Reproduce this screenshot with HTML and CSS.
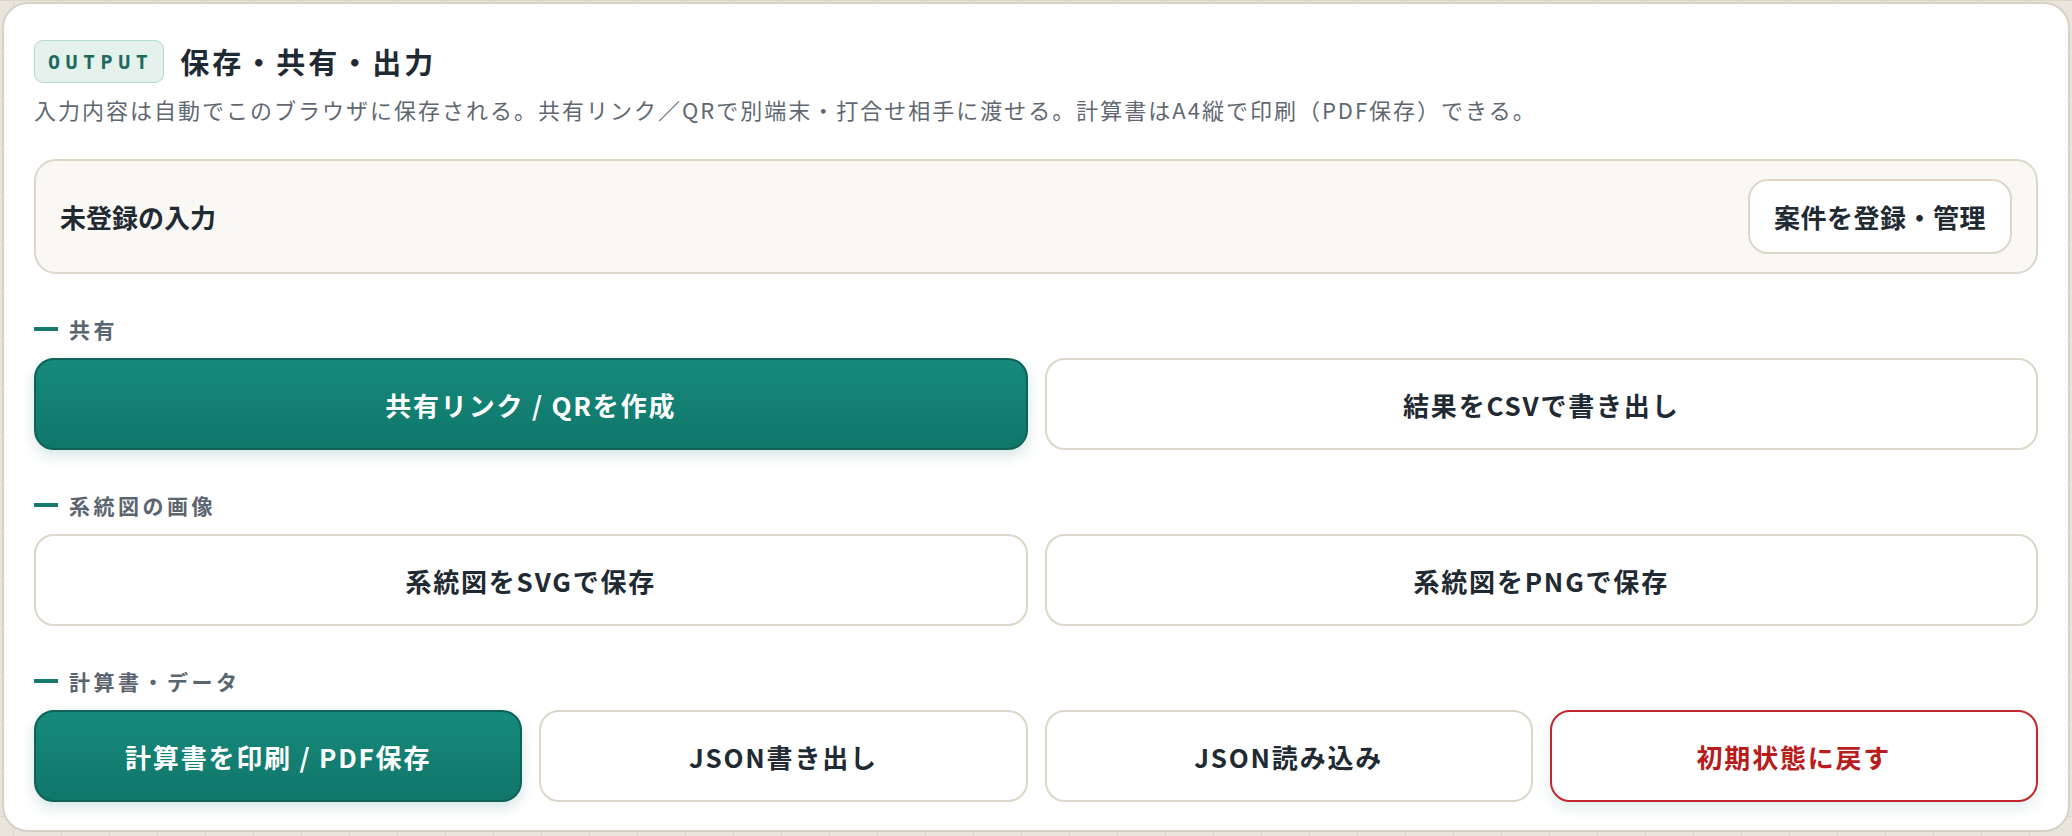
FILE: index.html
```html
<!DOCTYPE html>
<html lang="ja">
<head>
    <meta charset="UTF-8">
    <meta name="viewport" content="width=device-width, initial-scale=1.0">
    <title>保存・共有・出力</title>
    <link rel="stylesheet" href="styles.css">
</head>
<body>
    <section class="panel">
        <header class="panel-head">
            <span class="tag">OUTPUT</span>
            <h2 class="panel-title">保存・共有・出力</h2>
        </header>
        <p class="panel-desc">入力内容は自動でこのブラウザに保存される。共有リンク／QRで別端末・打合せ相手に渡せる。計算書はA4縦で印刷（PDF保存）できる。</p>

        <div class="project-bar">
            <span class="project-name">未登録の入力</span>
            <button class="btn btn-manage">案件を登録・管理</button>
        </div>

        <div class="group">
            <h3 class="group-label">共有</h3>
            <div class="btn-row cols-2">
                <button class="btn btn-primary">共有リンク / QRを作成</button>
                <button class="btn">結果をCSVで書き出し</button>
            </div>
        </div>

        <div class="group">
            <h3 class="group-label">系統図の画像</h3>
            <div class="btn-row cols-2">
                <button class="btn">系統図をSVGで保存</button>
                <button class="btn">系統図をPNGで保存</button>
            </div>
        </div>

        <div class="group">
            <h3 class="group-label">計算書・データ</h3>
            <div class="btn-row cols-4">
                <button class="btn btn-primary">計算書を印刷 / PDF保存</button>
                <button class="btn">JSON書き出し</button>
                <button class="btn">JSON読み込み</button>
                <button class="btn btn-danger">初期状態に戻す</button>
            </div>
        </div>
    </section>
</body>
</html>
```

FILE: styles.css
```css
body {
    margin: 0;
    padding: 2px;
    font-family: "Noto Sans CJK JP", "Noto Sans", sans-serif;
    color: #1f2a33;
    background-color: #e9e5dc;
    background-image:
        linear-gradient(to right, #ddd7cb 1px, transparent 1px),
        linear-gradient(to bottom, #ddd7cb 1px, transparent 1px);
    background-size: 48px 48px;
    background-position: 13px 0;
}

.panel {
    background: #ffffff;
    border: 2px solid #d8d1c4;
    border-radius: 26px;
    padding: 36px 30px 28px;
}

.panel-head {
    display: flex;
    align-items: center;
    gap: 16px;
}

.tag {
    display: inline-flex;
    align-items: center;
    box-sizing: border-box;
    height: 43px;
    padding: 0 10px 0 13px;
    background: #e4f1ed;
    border: 1.5px solid #b5d9cf;
    border-radius: 9px;
    font-family: "DejaVu Sans Mono", "Liberation Mono", monospace;
    font-size: 20px;
    font-weight: 700;
    letter-spacing: 5.5px;
    color: #1d6b5e;
}

.panel-title {
    margin: 0;
    font-size: 29px;
    font-weight: 700;
    letter-spacing: 3px;
    line-height: 1.2;
}

.panel-desc {
    margin: 10px 0 0;
    font-size: 22px;
    line-height: 32px;
    letter-spacing: 2px;
    color: #5f6872;
}

.project-bar {
    margin-top: 34px;
    display: flex;
    align-items: center;
    justify-content: space-between;
    padding: 18px 24px;
    background: #faf8f4;
    border: 2px solid #ddd6c9;
    border-radius: 22px;
}

.project-name {
    font-size: 26px;
    font-weight: 700;
}

.group {
    margin-top: 40px;
}

.group-label {
    display: flex;
    align-items: center;
    gap: 11px;
    margin: 0 0 14px;
    font-size: 21px;
    line-height: 30px;
    font-weight: 700;
    letter-spacing: 3.5px;
    color: #5b6570;
}

.group-label::before {
    content: "";
    width: 24px;
    height: 4px;
    background: #187a6c;
}

.btn-row {
    display: grid;
    gap: 17px;
}

.cols-2 { grid-template-columns: repeat(2, 1fr); }
.cols-4 { grid-template-columns: repeat(4, 1fr); }

.btn {
    height: 92px;
    background: #ffffff;
    border: 2px solid #ddd6c9;
    border-radius: 20px;
    font-family: inherit;
    font-size: 26px;
    font-weight: 700;
    letter-spacing: 1.8px;
    color: #1f2a33;
    cursor: pointer;
}

.btn-manage {
    height: 75px;
    padding: 0 24px;
    letter-spacing: 0.5px;
}

.btn-primary {
    color: #ffffff;
    background: linear-gradient(to bottom, #168a7c, #10766a);
    border-color: #0e6157;
    box-shadow: 0 6px 14px rgba(17, 117, 103, 0.18);
}

.btn-danger {
    color: #b91c1c;
    border-color: #c1272d;
    box-shadow: 0 6px 14px rgba(17, 117, 103, 0.12);
}
```
